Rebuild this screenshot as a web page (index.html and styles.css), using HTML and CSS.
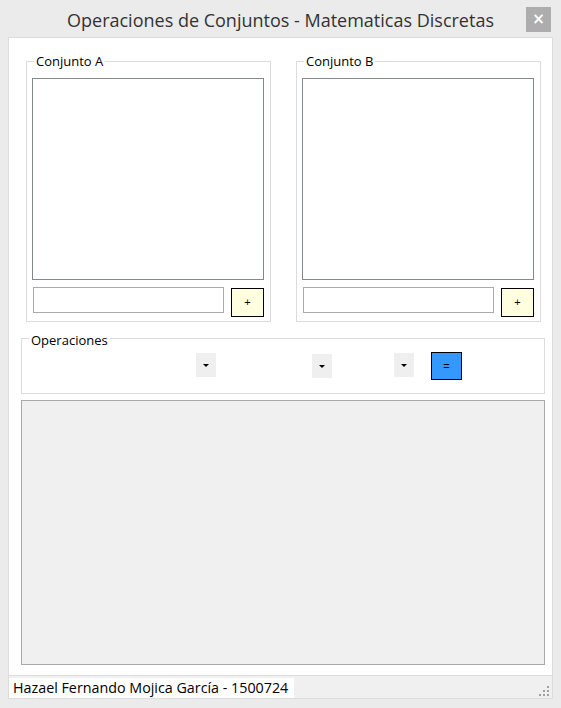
FILE: index.html
```html
<!DOCTYPE html>
<html lang="es">
<head>
<meta charset="utf-8">
<title>Operaciones de Conjuntos</title>
<link rel="stylesheet" href="styles.css">
</head>
<body>
<div class="window">
  <div class="titlebar">
    <div></div>
    <div class="title">Operaciones de Conjuntos - Matematicas Discretas</div>
    <div class="close-wrap"><button class="close">&#xD7;</button></div>
  </div>
  <div class="client">
    <div class="content">
      <div class="sets">
        <div class="group set">
          <span class="legend">Conjunto A</span>
          <div class="listbox"></div>
          <div class="add-row"><div class="textbox"></div><button class="add">+</button></div>
        </div>
        <div class="group set">
          <span class="legend">Conjunto B</span>
          <div class="listbox"></div>
          <div class="add-row"><div class="textbox"></div><button class="add">+</button></div>
        </div>
      </div>
      <div class="group ops">
        <span class="legend ops-legend">Operaciones</span>
        <div class="combo c1"><span class="tri"></span></div>
        <div class="combo c2"><span class="tri"></span></div>
        <div class="combo c3"><span class="tri"></span></div>
        <button class="eq">=</button>
      </div>
      <div class="result"></div>
    </div>
    <div class="status">
      <span class="status-label">Hazael Fernando Mojica García - 1500724</span>
      <svg class="grip" width="10" height="10" viewBox="0 0 10 10">
        <rect x="8" y="0" width="2" height="2"/>
        <rect x="4" y="4" width="2" height="2"/>
        <rect x="8" y="4" width="2" height="2"/>
        <rect x="0" y="8" width="2" height="2"/>
        <rect x="4" y="8" width="2" height="2"/>
        <rect x="8" y="8" width="2" height="2"/>
      </svg>
    </div>
  </div>
</div>
</body>
</html>
```

FILE: styles.css
```css
* { box-sizing: border-box; }
html, body { margin: 0; padding: 0; }
body {
  width: 561px;
  height: 708px;
  background: #e9e9e9;
  overflow: hidden;
  font-family: "Open Sans", "Noto Sans", sans-serif;
}
.window {
  width: 561px;
  height: 708px;
  background: #ebebeb;
  display: flex;
  flex-direction: column;
}
.titlebar {
  height: 37px;
  display: grid;
  grid-template-columns: 1fr auto 1fr;
  align-items: start;
}
.title {
  margin-top: 8px;
  font-size: 18px;
  line-height: 24px;
  color: #333333;
  white-space: nowrap;
}
.close-wrap {
  display: flex;
  justify-content: flex-end;
}
.close {
  margin-top: 7px;
  margin-right: 10px;
  width: 25px;
  height: 25px;
  border: none;
  padding: 0;
  background: #adadad;
  color: #ffffff;
  font-family: "DejaVu Sans", sans-serif;
  font-weight: bold;
  font-size: 15px;
  line-height: 25px;
}
.client {
  margin-left: 8px;
  width: 545px;
  height: 662px;
  border: 1px solid #dcdcdc;
  display: flex;
  flex-direction: column;
}
.content {
  height: 637px;
  background: #ffffff;
  display: flex;
  flex-direction: column;
}
.sets {
  display: flex;
  gap: 25px;
  margin-top: 23px;
  margin-left: 17px;
}
.group {
  position: relative;
  border: 1px solid #dcdcdc;
}
.legend {
  position: absolute;
  top: -9px;
  left: 7px;
  padding: 0 2px;
  background: #ffffff;
  font-size: 13px;
  line-height: 16px;
  color: #000000;
  white-space: nowrap;
}
.set {
  width: 245px;
  height: 261px;
  padding: 16px 5px 0 5px;
}
.listbox {
  width: 232px;
  height: 202px;
  border: 1px solid #828790;
  background: #ffffff;
}
.add-row {
  display: flex;
  align-items: flex-start;
  margin-top: 7px;
}
.textbox {
  margin-left: 1px;
  width: 191px;
  height: 26px;
  border: 1px solid #ababab;
  background: #ffffff;
}
.add {
  margin-left: 7px;
  margin-top: 1px;
  width: 33px;
  height: 29px;
  padding: 0;
  border: 1px solid #000000;
  background: #ffffe0;
  color: #000000;
  font-family: "Liberation Sans", sans-serif;
  font-size: 11px;
  line-height: 27px;
}
.ops {
  margin-top: 16px;
  margin-left: 12px;
  width: 524px;
  height: 56px;
  display: flex;
  align-items: flex-start;
}
.ops-legend {
  top: -7px;
}
.combo {
  width: 20px;
  height: 24px;
  background: #efefef;
  display: flex;
  align-items: center;
  justify-content: center;
}
.c1 { margin-left: 174px; margin-top: 14px; }
.c2 { margin-left: 96px; margin-top: 15px; }
.c3 { margin-left: 62px; margin-top: 14px; }
.tri {
  width: 0;
  height: 0;
  border-left: 3px solid transparent;
  border-right: 3px solid transparent;
  border-top: 3px solid #000000;
}
.eq {
  margin-left: 17px;
  margin-top: 13px;
  width: 31px;
  height: 28px;
  padding: 0;
  border: 1px solid #000000;
  background: #3399ff;
  color: #000000;
  font-family: "Liberation Sans", sans-serif;
  font-size: 11px;
  line-height: 26px;
}
.result {
  margin-top: 6px;
  margin-left: 12px;
  width: 524px;
  height: 265px;
  border: 1px solid #a9a9a9;
  background: #f0f0f0;
}
.status {
  height: 23px;
  border-top: 1px solid #dcdcdc;
  background: #f0f0f0;
  display: flex;
  align-items: flex-end;
}
.status-label {
  width: 285px;
  height: 20px;
  padding-left: 4px;
  background: #ffffff;
  font-size: 14.3px;
  line-height: 20px;
  color: #000000;
  white-space: nowrap;
}
.grip {
  margin-left: auto;
  margin-right: 3px;
  margin-bottom: 2px;
  fill: #a0a0a0;
}
```
